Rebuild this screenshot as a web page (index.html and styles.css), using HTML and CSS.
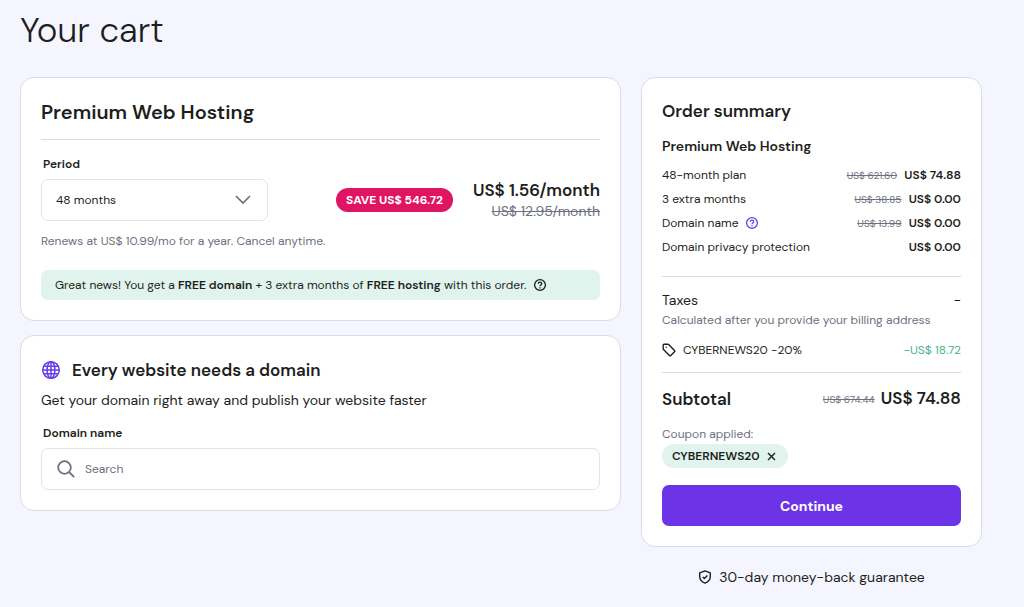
FILE: index.html
```html
<!DOCTYPE html>
<html lang="en">
<head>
  <meta charset="UTF-8">
  <meta name="viewport" content="width=device-width, initial-scale=1">
  <title>Your cart</title>
  <link rel="stylesheet" href="styles.css">
</head>
<body>
  <main class="cart">
    <h1>Your cart</h1>

    <div class="columns">
      <div class="left">
        <section class="card">
          <h2 class="plan-title">Premium Web Hosting</h2>
          <label class="label" for="period">Period</label>
          <div class="period-row">
            <div class="select-wrap">
              <select id="period">
                <option>48 months</option>
              </select>
              <svg class="chevron" width="16" height="10" viewBox="0 0 16 10" fill="none" stroke="#6d7081" stroke-width="1.7"><path d="M1 1l7 7 7-7"/></svg>
            </div>
            <span class="save">SAVE US$ 546.72</span>
            <div class="price">
              <strong>US$ 1.56/month</strong>
              <s>US$ 12.95/month</s>
            </div>
          </div>
          <p class="renews">Renews at US$ 10.99/mo for a year. Cancel anytime.</p>
          <p class="notice">
            <span>Great news! You get a <b>FREE domain</b> + 3 extra months of <b>FREE hosting</b> with this order.</span>
            <svg width="14" height="14" viewBox="0 0 14 14" fill="none" stroke="#1d1e20" stroke-width="1.3"><circle cx="7" cy="7" r="5.4"/><path d="M5.3 5.800c0-2.300 3.400-2.200 3.400-.1C8.700 7 7 7 7 8.200M7 9.200v1.300"/></svg>
          </p>
        </section>

        <section class="card">
          <h2 class="domain-title">
            <svg width="20" height="20" viewBox="0 0 20 20" fill="none" stroke="#673de6" stroke-width="1.5"><circle cx="10" cy="10" r="8.300"/><ellipse cx="10" cy="10" rx="3.900" ry="8.300"/><path d="M10 1.700v16.600M1.700 10h16.600M3 6.200h14M3 13.800h14"/></svg>
            Every website needs a domain
          </h2>
          <p class="domain-text">Get your domain right away and publish your website faster</p>
          <label class="label" for="domain">Domain name</label>
          <div class="search">
            <svg width="18" height="18" viewBox="0 0 18 18" fill="none" stroke="#6d7081" stroke-width="1.8"><circle cx="7.500" cy="7.500" r="6.300"/><path d="M12 12l5.200 5.200"/></svg>
            <input type="text" id="domain" placeholder="Search">
          </div>
        </section>
      </div>

      <aside class="right">
        <section class="card">
          <h2 class="summary-title">Order summary</h2>
          <h3>Premium Web Hosting</h3>
          <table class="items">
            <tr><th scope="row">48-month plan</th><td><s>US$ 621.60</s> <b>US$ 74.88</b></td></tr>
            <tr><th scope="row">3 extra months</th><td><s>US$ 38.85</s> <b>US$ 0.00</b></td></tr>
            <tr>
              <th scope="row"><span class="with-icon">Domain name
                <svg width="14" height="14" viewBox="0 0 14 14" fill="none" stroke="#673de6" stroke-width="1.3"><circle cx="7" cy="7" r="5.400"/><path d="M5.300 5.800c0-2.300 3.400-2.200 3.400-.1C8.700 7 7 7 7 8.200M7 9.200v1.300"/></svg></span></th>
              <td><s>US$ 13.99</s> <b>US$ 0.00</b></td>
            </tr>
            <tr><th scope="row">Domain privacy protection</th><td><b>US$ 0.00</b></td></tr>
          </table>

          <div class="extras">
            <div class="row taxes"><span>Taxes</span><span>-</span></div>
            <p class="muted">Calculated after you provide your billing address</p>
            <div class="row discount">
              <span class="tag">
                <svg width="14" height="14" viewBox="0 0 14 14" fill="none" stroke="#1d1e20" stroke-width="1.400" stroke-linejoin="round"><path d="M1.200 2a.8.8 0 0 1 .8-.8h3.900a1 1 0 0 1 .7.300l5.900 5.900a1 1 0 0 1 0 1.400l-3.700 3.700a1 1 0 0 1-1.400 0L1.500 6.600a1 1 0 0 1-.3-.7z"/><circle cx="4.200" cy="4.200" r=".7" fill="#1d1e20" stroke="none"/></svg>
                CYBERNEWS20 -20%
              </span>
              <span class="green">-US$ 18.72</span>
            </div>
          </div>

          <div class="row subtotal">
            <span>Subtotal</span>
            <span class="total"><s>US$ 674.44</s> US$ 74.88</span>
          </div>
          <p class="muted">Coupon applied:</p>
          <div class="coupon">
            CYBERNEWS20
            <button type="button" class="remove" aria-label="Remove coupon">
              <svg width="9" height="9" viewBox="0 0 9 9" fill="none" stroke="#1d1e20" stroke-width="1.400"><path d="M1 1l7 7M8 1L1 8"/></svg>
            </button>
          </div>
          <button type="button" class="continue">Continue</button>
        </section>
        <p class="guarantee">
          <svg width="14" height="14" viewBox="0 0 14 14" fill="none" stroke="#1d1e20" stroke-width="1.400" stroke-linejoin="round"><path d="M7 .9l5.300 2v3.600c0 3.200-2.100 5.400-5.300 6.600C3.800 11.900 1.700 9.700 1.700 6.500V2.900z"/><path d="M4.700 6.900l1.700 1.600 3-3"/></svg>
          30-day money-back guarantee
        </p>
      </aside>
    </div>
  </main>
</body>
</html>
```
FILE: styles.css
```css
* {
  box-sizing: border-box;
}

body {
  margin: 0;
  background: #f4f5ff;
  color: #1d1e20;
  font-family: "DM Sans", Inter, sans-serif;
  font-size: 12px;
  line-height: 20px;
}

h1, h2, h3, p {
  margin: 0;
}

svg {
  flex: none;
}

.cart {
  padding: 9px 42px 16px 20px;
}

h1 {
  font-size: 35px;
  font-weight: 300;
  line-height: 42px;
  margin-bottom: 26px;
}

.columns {
  display: grid;
  grid-template-columns: 1fr 341px;
  gap: 20px;
  align-items: start;
}

.left {
  display: grid;
  gap: 14px;
}

.card {
  background: #fff;
  border: 1px solid #dadce6;
  border-radius: 14px;
  padding: 20px;
}

h2, h3 {
  font-weight: 600;
}

.plan-title {
  font-size: 20px;
  line-height: 28px;
  padding-bottom: 13px;
  border-bottom: 1px solid #dadce0;
  margin-bottom: 14px;
}

.label {
  display: block;
  padding-left: 2px;
  font-weight: 600;
  margin-bottom: 5px;
}

.period-row {
  display: flex;
  align-items: center;
}

.select-wrap {
  display: grid;
  align-items: center;
  width: 227px;
}

.select-wrap select,
.chevron {
  grid-area: 1 / 1;
}

select {
  appearance: none;
  width: 100%;
  height: 42px;
  border: 1px solid #e3e4ea;
  border-radius: 7px;
  background: #fff;
  color: inherit;
  font: inherit;
  padding: 0 14px;
}

.chevron {
  justify-self: end;
  margin-right: 17px;
  pointer-events: none;
}

.save {
  margin-left: auto;
  background: #df1463;
  border-radius: 12px;
  color: #fff;
  font-weight: 700;
  line-height: 24px;
  padding: 0 10px;
}

.price {
  margin-left: 20px;
  text-align: right;
}

.price strong {
  display: block;
  font-size: 17px;
  font-weight: 600;
  line-height: 22px;
}

.price s {
  display: block;
  color: #6d7081;
  font-size: 14px;
}

.renews {
  color: #6d7081;
  margin-top: 10px;
}

.notice {
  display: flex;
  align-items: center;
  gap: 7px;
  background: #e0f3ed;
  border-radius: 7px;
  margin-top: 19px;
  padding: 5px 14px;
}

b {
  font-weight: 600;
}

.domain-title {
  display: flex;
  align-items: center;
  gap: 11px;
  font-size: 17px;
  line-height: 28px;
}

.domain-text {
  font-size: 14px;
  margin: 6px 0 13px;
}

.search {
  display: flex;
  align-items: center;
  gap: 10px;
  height: 42px;
  border: 1px solid #e3e4ea;
  border-radius: 7px;
  padding: 0 15px;
}

.search input {
  flex: 1;
  min-width: 0;
  border: 0;
  outline: 0;
  padding: 0;
  background: none;
  color: inherit;
  font: inherit;
}

.search input::placeholder {
  color: #6d7081;
}

.summary-title {
  font-size: 17px;
  line-height: 26px;
  margin-bottom: 12px;
}

h3 {
  font-size: 14px;
}

.items {
  width: 100%;
  border-collapse: collapse;
  margin: 7px 0 17px;
}

.items th,
.items td {
  padding: 0;
  height: 24px;
}

.items th {
  text-align: left;
  font-weight: 400;
}

.items td {
  text-align: right;
}

.items b {
  margin-left: 4px;
}

.items s,
.total s {
  color: #6d7081;
  font-size: 10px;
  font-weight: 400;
}

.with-icon {
  display: flex;
  align-items: center;
  gap: 7px;
}

.row {
  display: flex;
  align-items: center;
  justify-content: space-between;
}

.extras {
  border: solid #dadce0;
  border-width: 1px 0;
  padding: 13px 0 12px;
}

.taxes {
  font-size: 14px;
}

.muted {
  color: #6d7081;
}

.discount {
  margin-top: 10px;
}

.tag {
  display: flex;
  align-items: center;
  gap: 7px;
}

.green {
  color: #4cb38f;
}

.subtotal {
  font-size: 17px;
  font-weight: 600;
  line-height: 26px;
  margin: 12px 0 11px;
}

.total s {
  margin-right: 2px;
  vertical-align: 1px;
}

.coupon {
  display: inline-flex;
  align-items: center;
  gap: 7px;
  background: #e0f3ed;
  border-radius: 12px;
  font-weight: 600;
  line-height: 24px;
  padding: 0 12px 0 10px;
}

.remove {
  display: flex;
  border: 0;
  background: none;
  padding: 0;
}

.continue {
  display: block;
  width: 100%;
  height: 41px;
  margin-top: 17px;
  border: 0;
  border-radius: 7px;
  background: #6c34e6;
  color: #fff;
  font: inherit;
  font-size: 14px;
  font-weight: 700;
}

.guarantee {
  display: flex;
  align-items: center;
  justify-content: center;
  gap: 7px;
  font-size: 14px;
  margin-top: 20px;
}
```
